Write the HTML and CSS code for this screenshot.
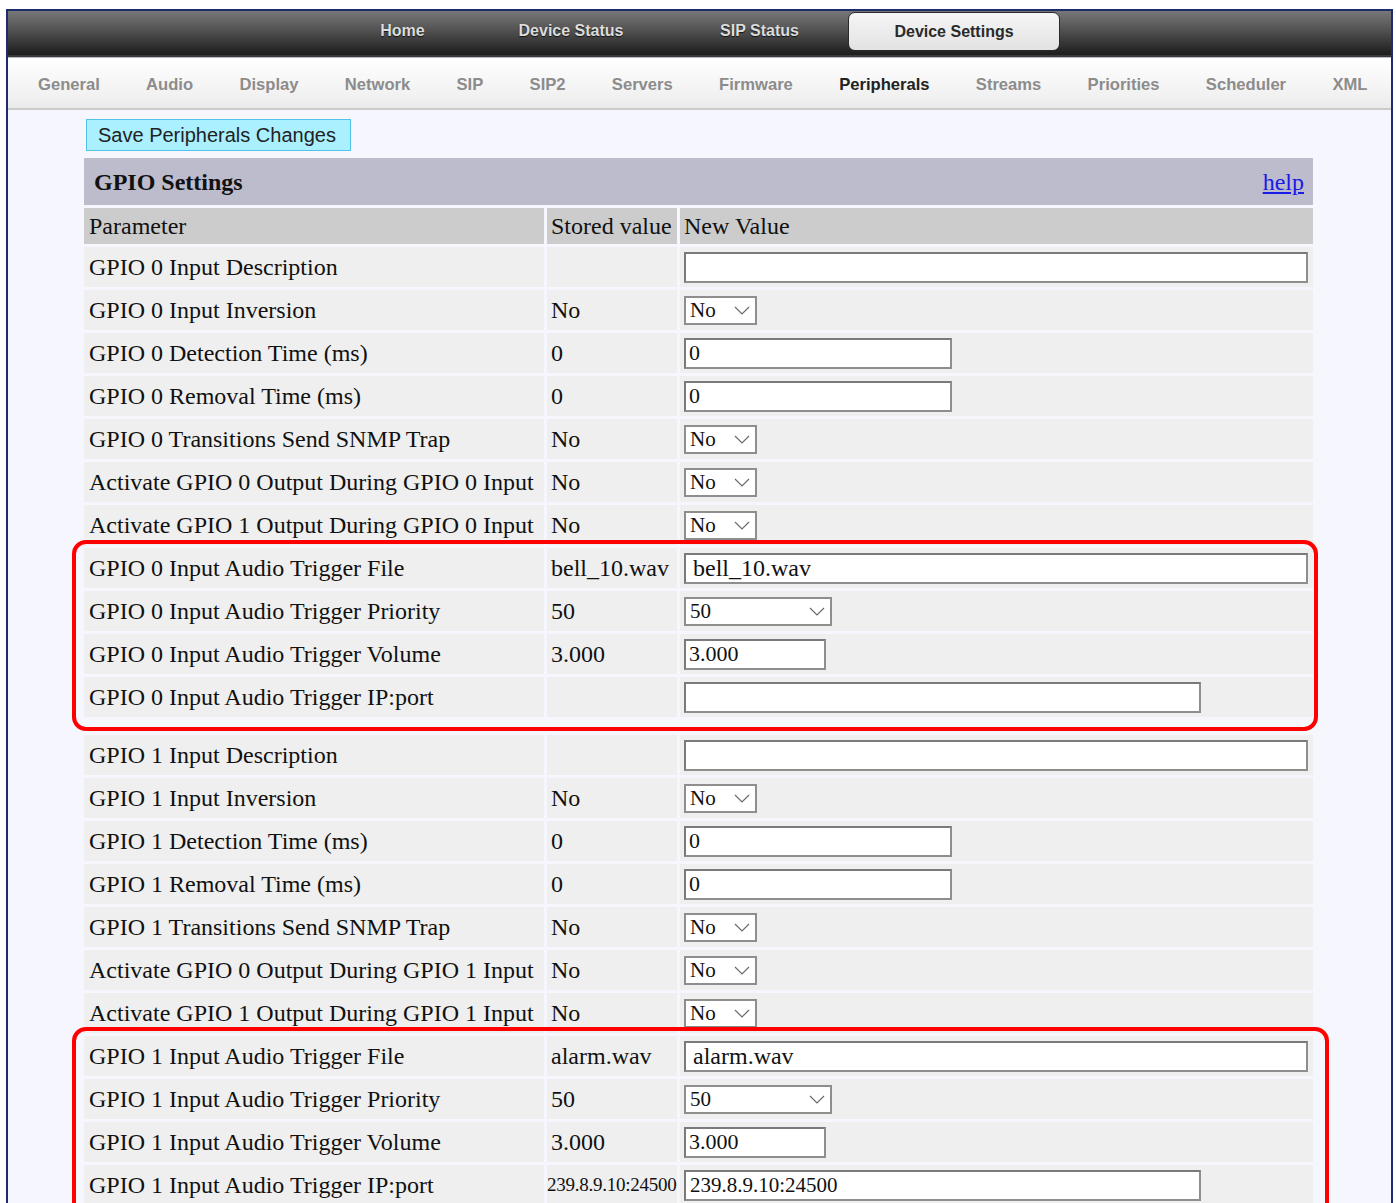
FILE: index.html
```html
<!DOCTYPE html>
<html lang="en">
<head>
<meta charset="utf-8">
<title>Device Settings - Peripherals</title>
<link rel="stylesheet" href="styles.css">
</head>
<body>
<div class="frame">
  <nav class="topnav">
    <a class="top-item w-home" href="#">Home</a>
    <a class="top-item w-status" href="#">Device Status</a>
    <a class="top-item w-sip" href="#">SIP Status</a>
    <a class="top-item tab" href="#">Device Settings</a>
  </nav>
  <nav class="subnav">
    <a href="#">General</a>
    <a href="#">Audio</a>
    <a href="#">Display</a>
    <a href="#">Network</a>
    <a href="#">SIP</a>
    <a href="#">SIP2</a>
    <a href="#">Servers</a>
    <a href="#">Firmware</a>
    <a href="#" class="current">Peripherals</a>
    <a href="#">Streams</a>
    <a href="#">Priorities</a>
    <a href="#">Scheduler</a>
    <a href="#">XML</a>
  </nav>
  <main class="content">
    <button class="save" type="button">Save Peripherals Changes</button>
    <div class="settings">
      <div class="title"><span>GPIO Settings</span><a href="#">help</a></div>
      <div class="colhead">Parameter</div>
      <div class="colhead">Stored value</div>
      <div class="colhead">New Value</div>

      <div class="cell name">GPIO 0 Input Description</div>
      <div class="cell stored"></div>
      <div class="cell value"><input class="in full" type="text" value=""></div>

      <div class="cell name">GPIO 0 Input Inversion</div>
      <div class="cell stored">No</div>
      <div class="cell value"><span class="sel"><select class="s-no"><option>No</option><option>Yes</option></select><svg class="chev" viewBox="0 0 16 9"><path d="M1 1 L8 8 L15 1"/></svg></span></div>

      <div class="cell name">GPIO 0 Detection Time (ms)</div>
      <div class="cell stored">0</div>
      <div class="cell value"><input class="in num" type="text" value="0"></div>

      <div class="cell name">GPIO 0 Removal Time (ms)</div>
      <div class="cell stored">0</div>
      <div class="cell value"><input class="in num" type="text" value="0"></div>

      <div class="cell name">GPIO 0 Transitions Send SNMP Trap</div>
      <div class="cell stored">No</div>
      <div class="cell value"><span class="sel"><select class="s-no"><option>No</option><option>Yes</option></select><svg class="chev" viewBox="0 0 16 9"><path d="M1 1 L8 8 L15 1"/></svg></span></div>

      <div class="cell name">Activate GPIO 0 Output During GPIO 0 Input</div>
      <div class="cell stored">No</div>
      <div class="cell value"><span class="sel"><select class="s-no"><option>No</option><option>Yes</option></select><svg class="chev" viewBox="0 0 16 9"><path d="M1 1 L8 8 L15 1"/></svg></span></div>

      <div class="cell name">Activate GPIO 1 Output During GPIO 0 Input</div>
      <div class="cell stored">No</div>
      <div class="cell value"><span class="sel"><select class="s-no"><option>No</option><option>Yes</option></select><svg class="chev" viewBox="0 0 16 9"><path d="M1 1 L8 8 L15 1"/></svg></span></div>

      <div class="cell name">GPIO 0 Input Audio Trigger File</div>
      <div class="cell stored">bell_10.wav</div>
      <div class="cell value"><input class="in full file" type="text" value="bell_10.wav"></div>

      <div class="cell name">GPIO 0 Input Audio Trigger Priority</div>
      <div class="cell stored">50</div>
      <div class="cell value"><span class="sel"><select class="s-prio"><option>50</option></select><svg class="chev" viewBox="0 0 16 9"><path d="M1 1 L8 8 L15 1"/></svg></span></div>

      <div class="cell name">GPIO 0 Input Audio Trigger Volume</div>
      <div class="cell stored">3.000</div>
      <div class="cell value"><input class="in vol" type="text" value="3.000"></div>

      <div class="cell name">GPIO 0 Input Audio Trigger IP:port</div>
      <div class="cell stored"></div>
      <div class="cell value"><input class="in ip" type="text" value=""></div>

      <div class="cell name spaced">GPIO 1 Input Description</div>
      <div class="cell stored spaced"></div>
      <div class="cell value spaced"><input class="in full" type="text" value=""></div>

      <div class="cell name">GPIO 1 Input Inversion</div>
      <div class="cell stored">No</div>
      <div class="cell value"><span class="sel"><select class="s-no"><option>No</option><option>Yes</option></select><svg class="chev" viewBox="0 0 16 9"><path d="M1 1 L8 8 L15 1"/></svg></span></div>

      <div class="cell name">GPIO 1 Detection Time (ms)</div>
      <div class="cell stored">0</div>
      <div class="cell value"><input class="in num" type="text" value="0"></div>

      <div class="cell name">GPIO 1 Removal Time (ms)</div>
      <div class="cell stored">0</div>
      <div class="cell value"><input class="in num" type="text" value="0"></div>

      <div class="cell name">GPIO 1 Transitions Send SNMP Trap</div>
      <div class="cell stored">No</div>
      <div class="cell value"><span class="sel"><select class="s-no"><option>No</option><option>Yes</option></select><svg class="chev" viewBox="0 0 16 9"><path d="M1 1 L8 8 L15 1"/></svg></span></div>

      <div class="cell name">Activate GPIO 0 Output During GPIO 1 Input</div>
      <div class="cell stored">No</div>
      <div class="cell value"><span class="sel"><select class="s-no"><option>No</option><option>Yes</option></select><svg class="chev" viewBox="0 0 16 9"><path d="M1 1 L8 8 L15 1"/></svg></span></div>

      <div class="cell name">Activate GPIO 1 Output During GPIO 1 Input</div>
      <div class="cell stored">No</div>
      <div class="cell value"><span class="sel"><select class="s-no"><option>No</option><option>Yes</option></select><svg class="chev" viewBox="0 0 16 9"><path d="M1 1 L8 8 L15 1"/></svg></span></div>

      <div class="cell name">GPIO 1 Input Audio Trigger File</div>
      <div class="cell stored">alarm.wav</div>
      <div class="cell value"><input class="in full file" type="text" value="alarm.wav"></div>

      <div class="cell name">GPIO 1 Input Audio Trigger Priority</div>
      <div class="cell stored">50</div>
      <div class="cell value"><span class="sel"><select class="s-prio"><option>50</option></select><svg class="chev" viewBox="0 0 16 9"><path d="M1 1 L8 8 L15 1"/></svg></span></div>

      <div class="cell name">GPIO 1 Input Audio Trigger Volume</div>
      <div class="cell stored">3.000</div>
      <div class="cell value"><input class="in vol" type="text" value="3.000"></div>

      <div class="cell name">GPIO 1 Input Audio Trigger IP:port</div>
      <div class="cell stored small">239.8.9.10:24500</div>
      <div class="cell value"><input class="in ip" type="text" value="239.8.9.10:24500"></div>

      <div class="mark mark-a"></div>
      <div class="mark mark-b"></div>
    </div>
  </main>
</div>
</body>
</html>
```

FILE: styles.css
```css
html, body {
  margin: 0;
  padding: 0;
  background: #ffffff;
}

body {
  font-family: "Liberation Serif", "Times New Roman", serif;
  color: #111;
  overflow: hidden;
}

.frame {
  margin: 9px 3px 0 6px;
  border: 2px solid #1d2c6a;
  border-bottom: none;
  min-height: 1300px;
  background: #f5f6fe;
}

/* ---- top dark bar ---- */
.topnav {
  display: flex;
  align-items: flex-start;
  height: 44px;
  padding-left: 326px;
  background: linear-gradient(#777777 0%, #555555 40%, #2a2a2a 85%, #1e1e1e 100%);
  border-bottom: 2px solid #3a3a3a;
  box-shadow: 0 1px 0 #b8bcc8;
}

.top-item {
  font-family: "Liberation Sans", Arial, sans-serif;
  font-weight: bold;
  font-size: 16px;
  color: #dcdcdc;
  text-decoration: none;
  text-align: center;
  line-height: 40px;
  text-shadow: 0 1px 1px #111;
}

.w-home { width: 137px; }
.w-status { width: 200px; }
.w-sip { width: 177px; }

.tab {
  width: 210px;
  height: 37px;
  line-height: 37px;
  margin-top: 1px;
  border: 1px solid #2a2a2a;
  border-radius: 7px;
  background: linear-gradient(#f6f6f6, #e2e2e2);
  color: #2a2a2a;
  text-shadow: none;
}

/* ---- sub navigation ---- */
.subnav {
  display: flex;
  align-items: center;
  gap: 46.3px;
  height: 52px;
  margin-top: 1px;
  padding-left: 30px;
  padding-top: 3px;
  box-sizing: border-box;
  background: linear-gradient(#ffffff, #f2f2f2 70%, #ebebeb);
  border-bottom: 2px solid #cbcbcb;
}

.subnav a {
  font-family: "Liberation Sans", Arial, sans-serif;
  font-weight: bold;
  font-size: 16.6px;
  color: #8c8c8c;
  text-decoration: none;
}

.subnav a.current {
  color: #222;
}

/* ---- content ---- */
.content {
  padding: 9px 0 0 76px;
  background: #f5f6fe;
}

.save {
  display: block;
  margin-left: 2px;
  width: 265px;
  height: 32px;
  padding: 0 0 0 11px;
  text-align: left;
  font-family: "Liberation Sans", Arial, sans-serif;
  font-size: 20px;
  color: #222;
  background: #aaf0ff;
  border: 1px solid #52c3e6;
}

.settings {
  position: relative;
  margin-top: 7px;
  width: 1229px;
  display: grid;
  grid-template-columns: 460px 130px 633px;
  column-gap: 3px;
  row-gap: 3px;
  font-size: 24px;
}

.title {
  grid-column: 1 / 4;
  height: 47px;
  display: flex;
  align-items: center;
  justify-content: space-between;
  padding: 2px 9px 0 10px;
  box-sizing: border-box;
  background: #bdbccd;
  font-weight: bold;
}

.title a {
  font-weight: normal;
  color: #1a1ae6;
  text-decoration: underline;
}

.colhead {
  height: 36px;
  display: flex;
  align-items: center;
  padding-left: 5px;
  background: #cccccc;
  white-space: nowrap;
}

.colhead:nth-child(3) { padding-left: 4px; }
.colhead:nth-child(4) { padding-left: 4px; }

.cell {
  height: 40px;
  display: flex;
  align-items: center;
  background: #efefef;
  white-space: nowrap;
}

.cell.spaced {
  margin-top: 15px;
}

.name {
  padding-left: 5px;
}

.stored {
  padding-left: 4px;
}

.stored.small {
  padding-left: 0;
  font-size: 19px;
  letter-spacing: -0.25px;
}

.value {
  padding-left: 4px;
}

/* ---- form fields ---- */
.in {
  box-sizing: border-box;
  height: 31px;
  padding: 0 0 0 3px;
  border: 2px solid #8e8e8e;
  border-top-color: #7a7a7a;
  border-left-color: #7a7a7a;
  background: #fff;
  font-family: "Liberation Serif", "Times New Roman", serif;
  font-size: 22px;
  color: #111;
  outline: none;
}

.in.full { width: 624px; }
.in.file { padding-left: 7px; font-size: 24px; }
.in.num { width: 268px; }
.in.vol { width: 142px; }
.in.ip { width: 517px; padding-left: 4px; font-size: 21px; }

.sel {
  position: relative;
  display: inline-block;
  height: 29px;
}

.sel select {
  appearance: none;
  -webkit-appearance: none;
  box-sizing: border-box;
  height: 29px;
  padding: 0 0 0 4px;
  border: 2px solid #8e8e8e;
  border-radius: 0;
  background: #fff;
  font-family: "Liberation Serif", "Times New Roman", serif;
  font-size: 21px;
  color: #111;
  outline: none;
}

.s-no { width: 73px; }
.s-prio { width: 148px; }

.chev {
  position: absolute;
  right: 7px;
  top: 10px;
  width: 16px;
  height: 9px;
  fill: none;
  stroke: #6a6a6a;
  stroke-width: 1.2;
  pointer-events: none;
}

/* ---- highlighted groups ---- */
.mark {
  position: absolute;
  left: -12px;
  box-sizing: border-box;
  border: 4px solid #ff0000;
  border-radius: 14px;
  pointer-events: none;
}

.mark-a {
  top: 382px;
  width: 1246px;
  height: 191px;
}

.mark-b {
  top: 869px;
  width: 1257px;
  height: 200px;
}
```
